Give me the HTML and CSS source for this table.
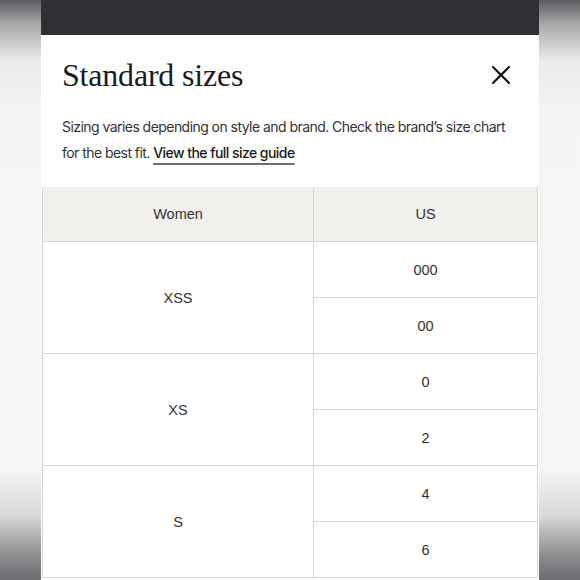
FILE: index.html
```html
<!DOCTYPE html>
<html lang="en">
<head>
<meta charset="utf-8">
<title>Standard sizes</title>
<link rel="stylesheet" href="styles.css">
</head>
<body>
<div class="modal">
  <div class="topbar"></div>
  <div class="head">
    <h1 class="title">Standard sizes</h1>
    <button class="close" aria-label="Close">
      <svg width="18" height="18" viewBox="0 0 18 18"><path d="M1 1 L17 17 M17 1 L1 17" stroke="#111" stroke-width="2.2" stroke-linecap="square" fill="none"/></svg>
    </button>
  </div>
  <p class="desc">Sizing varies depending on style and brand. Check the brand’s size chart for the best fit. <a class="guide" href="#">View the full size guide</a></p>
  <table class="sizes">
    <thead>
      <tr><th>Women</th><th>US</th></tr>
    </thead>
    <tbody>
      <tr><td rowspan="2">XSS</td><td>000</td></tr>
      <tr><td>00</td></tr>
      <tr><td rowspan="2">XS</td><td>0</td></tr>
      <tr><td>2</td></tr>
      <tr><td rowspan="2">S</td><td>4</td></tr>
      <tr><td>6</td></tr>
    </tbody>
  </table>
</div>
</body>
</html>
```
FILE: styles.css
```css
html, body {
  margin: 0;
  padding: 0;
  height: 580px;
  overflow: hidden;
}
body {
  background: linear-gradient(to bottom, #5b5c5f 0px, #a9aaab 25px, #ecebe9 60px, #f4f4f2 120px, #f5f5f3 470px, #d9d9d8 515px, #8d8e90 555px, #6b6c6f 580px);
  display: flex;
  justify-content: center;
}
.modal {
  width: 498px;
  background: #fff;
  height: 580px;
}
.topbar {
  height: 35px;
  background: #2f3033;
}
.head {
  display: flex;
  justify-content: space-between;
  align-items: center;
  padding: 20px 29px 0 21px;
}
.title {
  margin: 0;
  font-family: "Liberation Serif", serif;
  font-weight: 400;
  font-size: 32px;
  line-height: 40px;
  color: #1b1b1b;
  letter-spacing: -0.2px;
}
.close {
  border: 0;
  background: none;
  padding: 0;
  width: 18px;
  height: 18px;
  display: flex;
  margin-top: -1px;
}
.desc {
  margin: 19px 19px 0 21px;
  font-family: Inter, "Liberation Sans", sans-serif;
  font-size: 14px;
  line-height: 26px;
  color: #333;
  letter-spacing: -0.55px;
}
.guide {
  color: #1a1a1a;
  font-weight: 500;
  text-decoration: underline;
  text-decoration-color: #6e6e6e;
  text-decoration-thickness: 2px;
  text-underline-offset: 5px;
}
.sizes {
  margin: 21px 1px 0 1px;
  width: 496px;
  border-collapse: collapse;
  font-family: "Liberation Sans", Arial, sans-serif;
  font-size: 14.5px;
  color: #333;
  table-layout: fixed;
}
.sizes th, .sizes td {
  text-align: center;
  font-weight: 400;
  padding: 0;
  border: 1px solid #d6d6d6;
}
.sizes th {
  background: #f1f0ed;
  height: 54px;
  border-top: 0;
}
.sizes th:first-child { width: 270px; }
.sizes td {
  height: 55px;
  background: #fff;
}
```
